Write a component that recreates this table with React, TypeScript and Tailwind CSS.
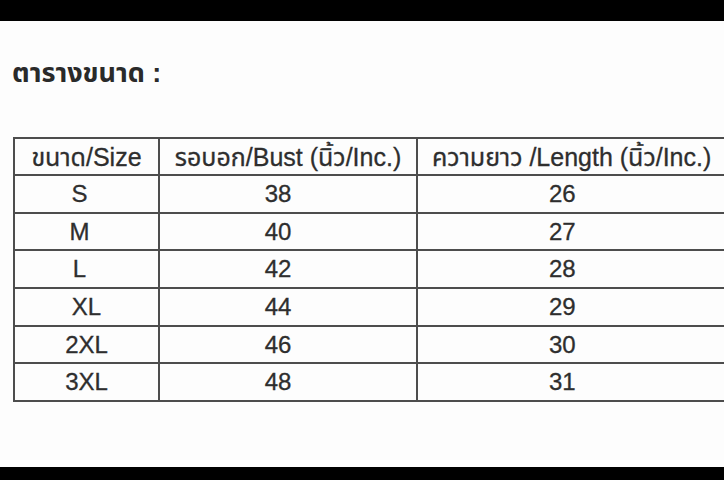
const rows = [
  { size: 'S', bust: '38', length: '26' },
  { size: 'M', bust: '40', length: '27' },
  { size: 'L', bust: '42', length: '28' },
  { size: 'XL', bust: '44', length: '29' },
  { size: '2XL', bust: '46', length: '30' },
  { size: '3XL', bust: '48', length: '31' },
]

const font = { fontFamily: '"Liberation Sans", "Noto Sans Thai", "Noto Sans", "DejaVu Sans", sans-serif' }

export default function App() {
  return (
    <div className="w-[724px] h-[480px] flex flex-col bg-black overflow-hidden" style={font}>
      <div className="h-[21px] bg-black" />
      <main className="flex-1 bg-[#fdfdfd] flex flex-col overflow-hidden">
        <h1 className="pl-[12px] pt-[36px] text-[27px] leading-[32px] font-bold text-[#2a2a2a]">ตารางขนาด :</h1>
        <div className="pl-[13px] pt-[48px]">
          <table className="w-[716px] border-collapse text-[#2e2e2e] table-fixed [-webkit-text-stroke:0.3px_#2e2e2e]">
            <colgroup>
              <col className="w-[145px]" />
              <col className="w-[258px]" />
              <col />
            </colgroup>
            <thead>
              <tr className="h-[37px] text-[25px] leading-[28px]">
                <th className="border-2 border-[#4d4d4d] font-normal text-center whitespace-nowrap">ขนาด/Size</th>
                <th className="border-2 border-[#4d4d4d] font-normal text-center whitespace-nowrap">รอบอก/Bust (นิ้ว/Inc.)</th>
                <th className="border-2 border-[#4d4d4d] font-normal text-left pl-[14px] whitespace-nowrap">ความยาว /Length (นิ้ว/Inc.)</th>
              </tr>
            </thead>
            <tbody>
              {rows.map((r) => (
                <tr key={r.size} className="h-[37.7px] text-[24px] leading-[28px]">
                  <td className={`border-2 border-[#4d4d4d] text-center ${r.size.length === 1 ? 'pr-[14px]' : ''}`}>{r.size}</td>
                  <td className="border-2 border-[#4d4d4d] text-center pr-[20px]">{r.bust}</td>
                  <td className="border-2 border-[#4d4d4d] text-left pl-[131px]">{r.length}</td>
                </tr>
              ))}
            </tbody>
          </table>
        </div>
      </main>
      <div className="h-[13px] bg-black" />
    </div>
  )
}
